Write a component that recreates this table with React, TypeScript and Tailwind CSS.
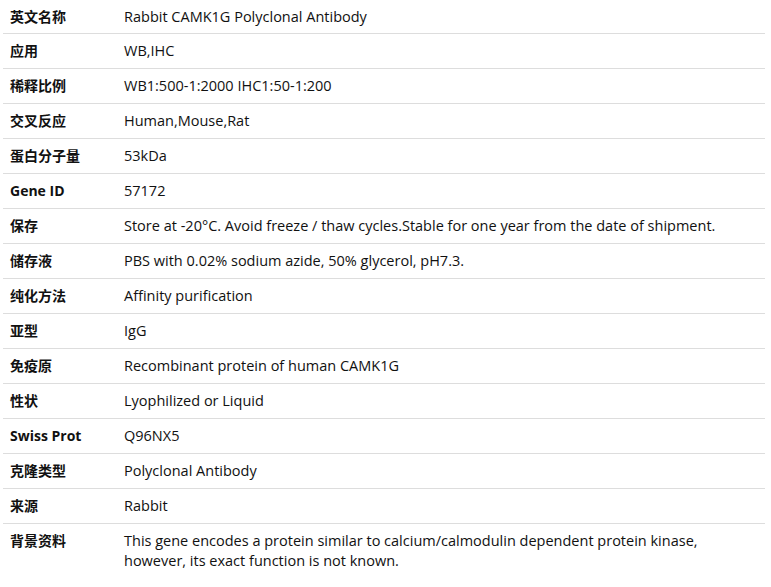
const rows: [string, string][] = [
  ["英文名称", "Rabbit CAMK1G Polyclonal Antibody"],
  ["应用", "WB,IHC"],
  ["稀释比例", "WB1:500-1:2000 IHC1:50-1:200"],
  ["交叉反应", "Human,Mouse,Rat"],
  ["蛋白分子量", "53kDa"],
  ["Gene ID", "57172"],
  ["保存", "Store at -20°C. Avoid freeze / thaw cycles.Stable for one year from the date of shipment."],
  ["储存液", "PBS with 0.02% sodium azide, 50% glycerol, pH7.3."],
  ["纯化方法", "Affinity purification"],
  ["亚型", "IgG"],
  ["免疫原", "Recombinant protein of human CAMK1G"],
  ["性状", "Lyophilized or Liquid"],
  ["Swiss Prot", "Q96NX5"],
  ["克隆类型", "Polyclonal Antibody"],
  ["来源", "Rabbit"],
  [
    "背景资料",
    "This gene encodes a protein similar to calcium/calmodulin dependent protein kinase, however, its exact function is not known.",
  ],
];

export default function App() {
  return (
    <div
      className="bg-white w-[771px] h-[587px] overflow-hidden text-[14px] text-[#111]"
      style={{ fontFamily: '"Open Sans", "Noto Sans CJK SC", sans-serif' }}
    >
      <table className="ml-[3px] w-[762px] border-collapse">
        <tbody>
          {rows.map(([k, v], i) => {
            // first row is a pixel shorter in the original
            const pad = i === 0 ? "pt-[7px] pb-[6px]" : "py-[7px]";
            return (
              <tr
                key={k}
                className={i < rows.length - 1 ? "border-b border-[#dddddd]" : ""}
              >
                <td className={`w-[114px] px-[7px] ${pad} leading-[20px] align-top font-bold`}>
                  {k}
                </td>
                <td className={`px-[7px] pr-[20px] ${pad} leading-[20px] align-top text-[14.5px]`}>
                  {v}
                </td>
              </tr>
            );
          })}
        </tbody>
      </table>
    </div>
  );
}
